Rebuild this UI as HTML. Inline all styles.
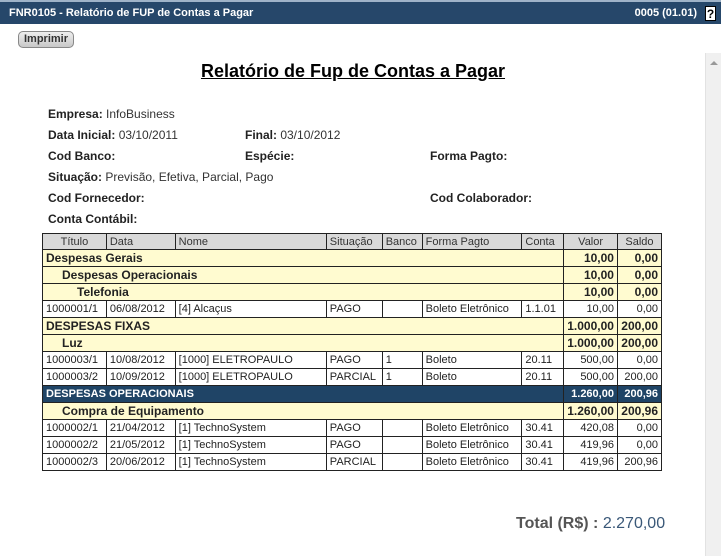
<!DOCTYPE html>
<html><head><meta charset="utf-8"><style>
*{margin:0;padding:0;box-sizing:border-box}
body{width:721px;height:556px;overflow:hidden;background:#fff;font-family:"Liberation Sans",Arial,sans-serif;font-size:12px;color:#222;position:relative}
.bar{position:absolute;left:0;top:0;width:721px;height:24px;background:#26476a;border-top:2px solid #9fb3c8;color:#fff;font-weight:bold;font-size:11px}
.bar .l{position:absolute;left:9px;top:5px}
.bar .r{position:absolute;right:24px;top:5px}
.help{position:absolute;right:5px;top:4px;width:11px;height:15px;background:#fff;color:#000;font-size:12px;text-align:center;line-height:15px;border:1px solid #000}
.btn{position:absolute;left:18px;top:31px;width:56px;height:17px;border:1px solid #888;border-radius:5px;background:linear-gradient(#eee,#c8c8c8);font-size:11px;font-weight:bold;color:#333;text-align:center;line-height:15px}
.sb{position:absolute;left:705px;top:53px;width:16px;height:503px;background:#f0f0f0;border-left:1px solid #e2e2e2}
.sb:after{content:"";position:absolute;left:4px;top:8px;border:4px solid transparent;border-bottom:4px solid #999;border-top:0}
h1{position:absolute;left:0;width:706px;top:61px;text-align:center;font-size:18px;font-weight:bold;color:#000;text-decoration:underline}
.f{position:absolute;font-size:12px;color:#333}
.f b{color:#222}
table{position:absolute;left:42px;top:233px;border-collapse:collapse;width:620px;font-size:11px}
td,th{border:1px solid #222;height:17px;padding:0 3px;white-space:nowrap;color:#222}
th{background:#d9d9d9;font-weight:normal;text-align:left;height:16px;color:#333}
.g td{background:#fffbd0;font-weight:bold;font-size:12px}
.d td{background:#1f4466;color:#fff;font-weight:bold;font-size:11px}
.n{text-align:right}
.c{text-align:center}
.total{position:absolute;left:516px;top:515px;font-size:16px;color:#555}
.total b{color:#555}
.total span{color:#3a5878}
</style></head><body>
<div class="bar"><span class="l">FNR0105 - Relatório de FUP de Contas a Pagar</span><span class="r">0005 (01.01)</span><span class="help">?</span></div>
<div class="btn">Imprimir</div>
<div class="sb"></div>
<h1>Relatório de Fup de Contas a Pagar</h1>
<div class="f" style="left:48px;top:107px"><b>Empresa:</b> InfoBusiness</div>
<div class="f" style="left:48px;top:128px"><b>Data Inicial:</b> 03/10/2011</div>
<div class="f" style="left:245px;top:128px"><b>Final:</b> 03/10/2012</div>
<div class="f" style="left:48px;top:149px"><b>Cod Banco:</b></div>
<div class="f" style="left:245px;top:149px"><b>Espécie:</b></div>
<div class="f" style="left:430px;top:149px"><b>Forma Pagto:</b></div>
<div class="f" style="left:48px;top:170px"><b>Situação:</b> Previsão, Efetiva, Parcial, Pago</div>
<div class="f" style="left:48px;top:191px"><b>Cod Fornecedor:</b></div>
<div class="f" style="left:430px;top:191px"><b>Cod Colaborador:</b></div>
<div class="f" style="left:48px;top:212px"><b>Conta Contábil:</b></div>
<table>
<colgroup><col style="width:64px"><col style="width:69px"><col style="width:152px"><col style="width:56px"><col style="width:40px"><col style="width:100px"><col style="width:42px"><col style="width:53px"><col style="width:44px"></colgroup>
<tr><th class="c">Título</th><th>Data</th><th>Nome</th><th>Situação</th><th>Banco</th><th>Forma Pagto</th><th>Conta</th><th class="c">Valor</th><th class="c">Saldo</th></tr>
<tr class="g"><td colspan="7">Despesas Gerais</td><td class="n">10,00</td><td class="n">0,00</td></tr>
<tr class="g"><td colspan="7" style="padding-left:19px">Despesas Operacionais</td><td class="n">10,00</td><td class="n">0,00</td></tr>
<tr class="g"><td colspan="7" style="padding-left:34px">Telefonia</td><td class="n">10,00</td><td class="n">0,00</td></tr>
<tr><td>1000001/1</td><td>06/08/2012</td><td>[4] Alcaçus</td><td>PAGO</td><td></td><td>Boleto Eletrônico</td><td>1.1.01</td><td class="n">10,00</td><td class="n">0,00</td></tr>
<tr class="g"><td colspan="7">DESPESAS FIXAS</td><td class="n">1.000,00</td><td class="n">200,00</td></tr>
<tr class="g"><td colspan="7" style="padding-left:19px">Luz</td><td class="n">1.000,00</td><td class="n">200,00</td></tr>
<tr><td>1000003/1</td><td>10/08/2012</td><td>[1000] ELETROPAULO</td><td>PAGO</td><td>1</td><td>Boleto</td><td>20.11</td><td class="n">500,00</td><td class="n">0,00</td></tr>
<tr><td>1000003/2</td><td>10/09/2012</td><td>[1000] ELETROPAULO</td><td>PARCIAL</td><td>1</td><td>Boleto</td><td>20.11</td><td class="n">500,00</td><td class="n">200,00</td></tr>
<tr class="d"><td colspan="7">DESPESAS OPERACIONAIS</td><td class="n">1.260,00</td><td class="n">200,96</td></tr>
<tr class="g"><td colspan="7" style="padding-left:19px">Compra de Equipamento</td><td class="n">1.260,00</td><td class="n">200,96</td></tr>
<tr><td>1000002/1</td><td>21/04/2012</td><td>[1] TechnoSystem</td><td>PAGO</td><td></td><td>Boleto Eletrônico</td><td>30.41</td><td class="n">420,08</td><td class="n">0,00</td></tr>
<tr><td>1000002/2</td><td>21/05/2012</td><td>[1] TechnoSystem</td><td>PAGO</td><td></td><td>Boleto Eletrônico</td><td>30.41</td><td class="n">419,96</td><td class="n">0,00</td></tr>
<tr><td>1000002/3</td><td>20/06/2012</td><td>[1] TechnoSystem</td><td>PARCIAL</td><td></td><td>Boleto Eletrônico</td><td>30.41</td><td class="n">419,96</td><td class="n">200,96</td></tr>
</table>
<div class="total"><b>Total (R$) :</b> <span>2.270,00</span></div>
</body></html>
